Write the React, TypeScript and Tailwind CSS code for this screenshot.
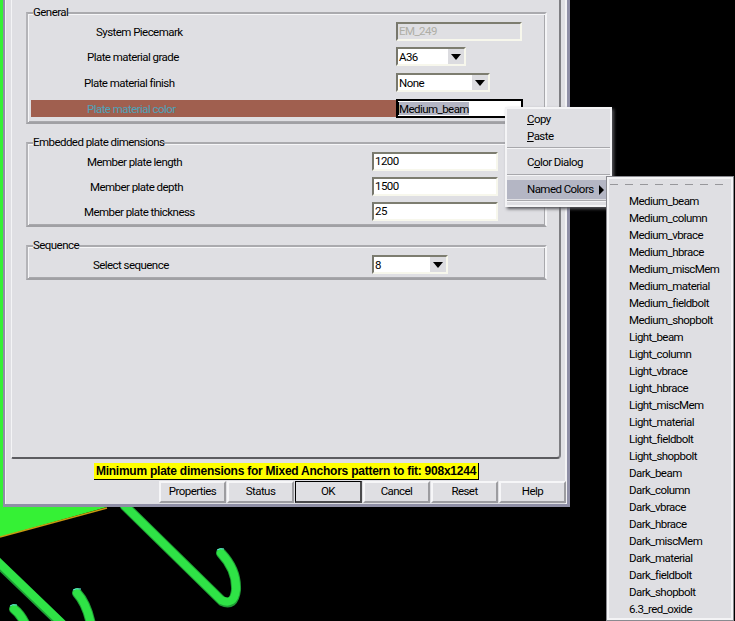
import type { ReactNode } from 'react';

const namedColors = [
  'Medium_beam', 'Medium_column', 'Medium_vbrace', 'Medium_hbrace', 'Medium_miscMem', 'Medium_material', 'Medium_fieldbolt', 'Medium_shopbolt',
  'Light_beam', 'Light_column', 'Light_vbrace', 'Light_hbrace', 'Light_miscMem', 'Light_material', 'Light_fieldbolt', 'Light_shopbolt',
  'Dark_beam', 'Dark_column', 'Dark_vbrace', 'Dark_hbrace', 'Dark_miscMem', 'Dark_material', 'Dark_fieldbolt', 'Dark_shopbolt',
  '6.3_red_oxide',
];

const sunken = 'h-[19px] border-2 border-t-[#7d7d70] border-l-[#77776c] border-r-[#f7f7ec] border-b-[#f7f7ec] flex items-center pl-[1px] leading-none';

function Combo({ value, width }: { value: string; width: string }) {
  return (
    <div className={`${sunken} ${width} bg-white justify-between`}>
      <span className="pt-[2px]">{value}</span>
      <span className="w-[16px] h-[15px] bg-[#dcdce0] flex items-center justify-center">
        <span className="w-0 h-0 border-x-[5px] border-x-transparent border-t-[6px] border-t-black" />
      </span>
    </div>
  );
}

function TextBox({ value, disabled }: { value: string; disabled?: boolean }) {
  return (
    <div className={`${sunken} w-[126px] ${disabled ? 'bg-[#dfdfe3] text-[#aeaea6]' : 'bg-white'}`}>{value}</div>
  );
}

function Group({ title, children, className }: { title: string; children: ReactNode; className: string }) {
  return (
    <div className={`relative w-[521px] ml-[14px] border-2 border-t-[#aaaaae] border-l-[#b4b4b8] border-r-[#f4f4f6] border-b-[#a0a0a4] shadow-[inset_1px_1px_0_#f6f6f8,inset_-1px_-1px_0_#a8a8ac] ${className}`}>
      <span className="absolute -top-[10px] left-[5px] bg-[#dfdfe3] h-[16px] leading-[16px] whitespace-nowrap">{title}</span>
      {children}
    </div>
  );
}

function Row({ label, labelClass, children, className }: { label: string; labelClass: string; children: ReactNode; className: string }) {
  return (
    <div className={`flex items-center h-[19px] ${className}`}>
      <span className={`whitespace-nowrap ${labelClass}`}>{label}</span>
      {children}
    </div>
  );
}

function MenuItem({ text }: { text: [string, string, string] }) {
  return (
    <div className="pl-[20px] h-[17px] leading-[17px]">
      {text[0]}
      <span className="underline">{text[1]}</span>
      {text[2]}
    </div>
  );
}

function Button({ label, active }: { label: string; active?: boolean }) {
  return (
    <div
      className={`w-[67px] h-[22px] shrink-0 flex items-center justify-center mr-[1px] border-2 ${
        active
          ? 'border-black border-r-[#4a4a4c] border-b-[#4a4a4c] border-l-[1px] border-t-[1px]'
          : 'border-t-[#f6f6f8] border-l-[#f6f6f8] border-r-[#9c9ca0] border-b-[#9c9ca0]'
      }`}
    >
      {label}
    </div>
  );
}

export default function App() {
  return (
    <div className="relative w-[735px] h-[621px] bg-black overflow-hidden text-[11.5px] tracking-[-0.55px] text-black font-['Roboto','Liberation_Sans',sans-serif]">
      {/* model behind the dialog */}
      <svg className="absolute inset-0" width="735" height="621" viewBox="0 0 735 621" fill="none">
        <polygon points="0,0 12,0 107,507 0,537" fill="#35f135" />
        <line x1="0" y1="537" x2="107" y2="508" stroke="#c89a10" strokeWidth="1.5" />
        <g stroke="#1f9c35" strokeWidth="10" strokeLinecap="round">
          <path d="M125,506 L222,601 Q234,607 236,590 Q237,570 221,553" />
          <path d="M-5,560 L70,632" />
          <path d="M77,593 Q88,605 92,630" />
          <path d="M14,609 Q22,615 28,630" />
        </g>
        <g stroke="#2fe346" strokeWidth="8" strokeLinecap="round">
          <path d="M124,505 L221,600 Q234,606 236,590 Q237,570 221,553" />
          <path d="M-5,559 L70,631" />
          <path d="M77,593 Q88,605 92,630" />
          <path d="M14,609 Q22,615 28,630" />
        </g>
        <g stroke="#5fe8e0" strokeWidth="1">
          <path d="M217,550 Q220,548 224,549" />
          <path d="M73,590 Q76,588 81,589" />
          <path d="M10,606 Q12,604 17,605" />
        </g>
      </svg>

      {/* dialog window */}
      <div className="absolute left-[3px] top-0 w-[567px] h-[507px] bg-[#dfdfe3] border-r-[3px] border-b-[3px] border-l-2 border-[#8f8fa6] flex flex-col">
        <div className="flex-1 flex flex-col border-l border-r-2 border-[#f2f2f4]">
          <div className="h-[459px] mr-[4px] ml-[5px] border-l border-l-[#f4f4f6] border-r-2 border-r-[#7e7e82] border-b-2 border-b-[#5c5c60] rounded-br-[4px] rounded-bl-[2px]">
            <Group title="General" className="mt-[12px] h-[112px]">
              <Row label="System Piecemark" labelClass="w-[368px] pl-[68px] pt-[2px]" className="mt-[8px]">
                <TextBox value="EM_249" disabled />
              </Row>
              <Row label="Plate material grade" labelClass="w-[368px] pl-[59px] pt-[2px]" className="mt-[6px]">
                <Combo value="A36" width="w-[70px]" />
              </Row>
              <Row label="Plate material finish" labelClass="w-[368px] pl-[56px] pt-[2px]" className="mt-[7px]">
                <Combo value="None" width="w-[94px]" />
              </Row>
              <Row label="Plate material color" labelClass="ml-[3px] w-[365px] h-[17px] leading-[19px] pl-[56px] bg-[#a05f4f] text-[#4ea3ba]" className="mt-[7px]">
                <div className="w-[127px] h-[19px] border-2 border-black bg-white flex items-center leading-none">
                  <span className="w-[1px] h-[13px] bg-black" />
                  <span className="bg-[#b4b6c4] h-[13px] leading-[14px]">Medium_beam</span>
                </div>
              </Row>
            </Group>
            <Group title="Embedded plate dimensions" className="mt-[18px] h-[85px]">
              <Row label="Member plate length" labelClass="w-[344px] pl-[59px] pt-[2px]" className="mt-[8px]">
                <TextBox value="1200" />
              </Row>
              <Row label="Member plate depth" labelClass="w-[344px] pl-[62px] pt-[2px]" className="mt-[6px]">
                <TextBox value="1500" />
              </Row>
              <Row label="Member plate thickness" labelClass="w-[344px] pl-[56px] pt-[2px]" className="mt-[6px]">
                <TextBox value="25" />
              </Row>
            </Group>
            <Group title="Sequence" className="mt-[18px] h-[35px]">
              <Row label="Select sequence" labelClass="w-[344px] pl-[65px] pt-[2px]" className="mt-[8px]">
                <Combo value="8" width="w-[76px]" />
              </Row>
            </Group>
          </div>
          <div className="h-[17px] mt-[4px] ml-[88px] w-[385px] bg-[#ffff00] border-b border-r border-black font-['Liberation_Sans',sans-serif] font-bold text-[12px] tracking-[-0.24px] text-center leading-[16px] whitespace-nowrap">
            Minimum plate dimensions for Mixed Anchors pattern to fit: 908x1244
          </div>
          <div className="flex ml-[153px] mt-[1px]">
            <Button label="Properties" />
            <Button label="Status" />
            <Button label="OK" active />
            <Button label="Cancel" />
            <Button label="Reset" />
            <Button label="Help" />
          </div>
        </div>
      </div>

      {/* context menu */}
      <div className="absolute left-[505px] top-[107px] w-[107px] h-[100px] bg-[#dfdfe3] border-2 border-[#f4f4f6] shadow-[2px_2px_3px_#55555a] pt-[2px]">
        <MenuItem text={['', 'C', 'opy']} />
        <MenuItem text={['', 'P', 'aste']} />
        <div className="h-[2px] bg-[#a8a8ac] border-b border-[#f4f4f6] mt-[2px] mb-[5px]" />
        <MenuItem text={['C', 'o', 'lor Dialog']} />
        <div className="h-[2px] bg-[#a8a8ac] border-b border-[#f4f4f6] mt-[3px] mb-[4px]" />
        <div className="flex items-center h-[19px] bg-[#b4b6c4] pl-[20px] whitespace-nowrap">
          Named Colors
          <span className="ml-[5px] w-0 h-0 border-y-[5px] border-y-transparent border-l-[5px] border-l-black" />
        </div>
        <div className="h-[2px] bg-[#a8a8ac] border-b border-[#f4f4f6] mt-[1px]" />
      </div>

      {/* named colors submenu */}
      <div className="absolute left-[607px] top-[177px] w-[126px] h-[443px] bg-[#dfdfe3] border-2 border-[#f4f4f6] shadow-[0_0_0_1px_#8a8a90]">
        <div className="ml-[1px] mr-[8px] mt-[5px] mb-[8px] h-[1px] bg-[repeating-linear-gradient(90deg,#97979b_0_8px,transparent_8px_15px)]" />
        {namedColors.map((name) => (
          <div key={name} className="pl-[20px] h-[17px] leading-[17px] whitespace-nowrap">
            {name}
          </div>
        ))}
      </div>
    </div>
  );
}
